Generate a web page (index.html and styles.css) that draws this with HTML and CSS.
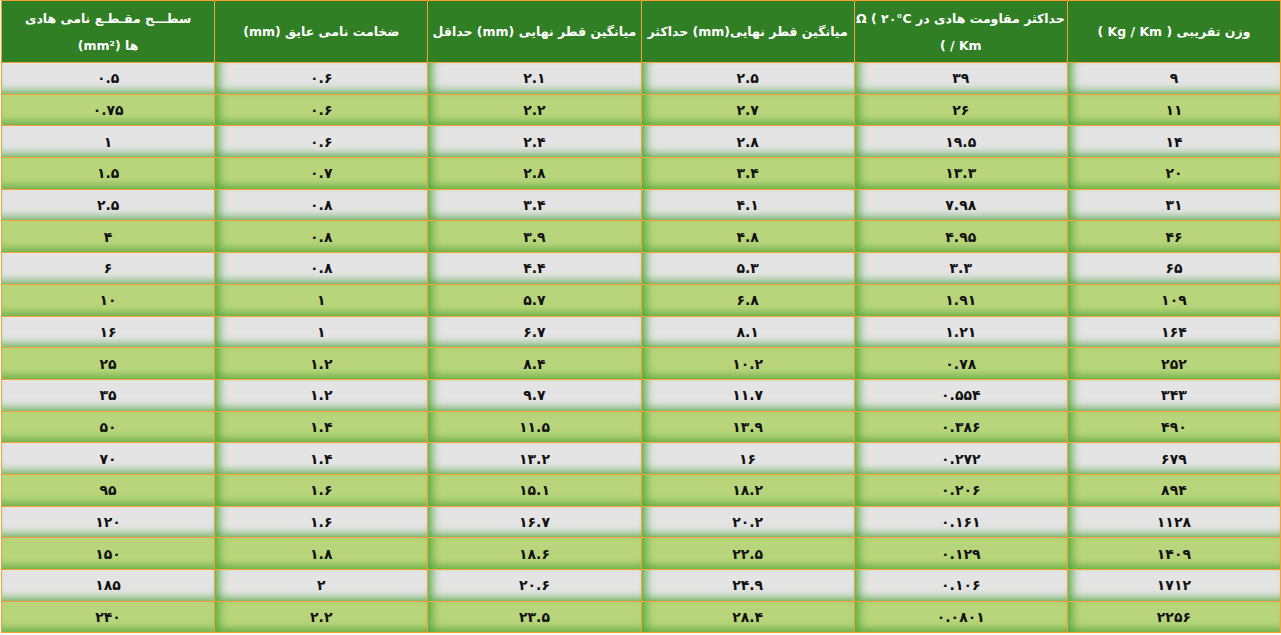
FILE: index.html
```html
<!DOCTYPE html>
<html lang="fa" dir="rtl">
<head>
<meta charset="utf-8">
<title>جدول مشخصات کابل</title>
<link rel="stylesheet" href="styles.css">
</head>
<body>
<table class="spec">
<thead>
<tr>
<th>وزن تقریبی ( Kg / Km )</th>
<th>حداکثر مقاومت هادی در <bdi class="ltr">۲۰°C</bdi> <bdi class="ltr">Ω (</bdi><br><bdi class="ltr">( / Km</bdi></th>
<th>میانگین قطر نهایی(mm) حداکثر</th>
<th>میانگین قطر نهایی (mm) حداقل</th>
<th>ضخامت نامی عایق (mm)</th>
<th>سطـــح مقـطـع نامی هادی<br>ها (mm²)</th>
</tr>
</thead>
<tbody>
<tr class="gray"><td>۹</td><td>۳۹</td><td>۲.۵</td><td>۲.۱</td><td>۰.۶</td><td>۰.۵</td></tr>
<tr class="green"><td>۱۱</td><td>۲۶</td><td>۲.۷</td><td>۲.۲</td><td>۰.۶</td><td>۰.۷۵</td></tr>
<tr class="gray"><td>۱۴</td><td>۱۹.۵</td><td>۲.۸</td><td>۲.۴</td><td>۰.۶</td><td>۱</td></tr>
<tr class="green"><td>۲۰</td><td>۱۳.۳</td><td>۳.۴</td><td>۲.۸</td><td>۰.۷</td><td>۱.۵</td></tr>
<tr class="gray"><td>۳۱</td><td>۷.۹۸</td><td>۴.۱</td><td>۳.۴</td><td>۰.۸</td><td>۲.۵</td></tr>
<tr class="green"><td>۴۶</td><td>۴.۹۵</td><td>۴.۸</td><td>۳.۹</td><td>۰.۸</td><td>۴</td></tr>
<tr class="gray"><td>۶۵</td><td>۳.۳</td><td>۵.۳</td><td>۴.۴</td><td>۰.۸</td><td>۶</td></tr>
<tr class="green"><td>۱۰۹</td><td>۱.۹۱</td><td>۶.۸</td><td>۵.۷</td><td>۱</td><td>۱۰</td></tr>
<tr class="gray"><td>۱۶۴</td><td>۱.۲۱</td><td>۸.۱</td><td>۶.۷</td><td>۱</td><td>۱۶</td></tr>
<tr class="green"><td>۲۵۲</td><td>۰.۷۸</td><td>۱۰.۲</td><td>۸.۴</td><td>۱.۲</td><td>۲۵</td></tr>
<tr class="gray"><td>۳۴۳</td><td>۰.۵۵۴</td><td>۱۱.۷</td><td>۹.۷</td><td>۱.۲</td><td>۳۵</td></tr>
<tr class="green"><td>۴۹۰</td><td>۰.۳۸۶</td><td>۱۳.۹</td><td>۱۱.۵</td><td>۱.۴</td><td>۵۰</td></tr>
<tr class="gray"><td>۶۷۹</td><td>۰.۲۷۲</td><td>۱۶</td><td>۱۳.۲</td><td>۱.۴</td><td>۷۰</td></tr>
<tr class="green"><td>۸۹۴</td><td>۰.۲۰۶</td><td>۱۸.۲</td><td>۱۵.۱</td><td>۱.۶</td><td>۹۵</td></tr>
<tr class="gray"><td>۱۱۲۸</td><td>۰.۱۶۱</td><td>۲۰.۲</td><td>۱۶.۷</td><td>۱.۶</td><td>۱۲۰</td></tr>
<tr class="green"><td>۱۴۰۹</td><td>۰.۱۲۹</td><td>۲۲.۵</td><td>۱۸.۶</td><td>۱.۸</td><td>۱۵۰</td></tr>
<tr class="gray"><td>۱۷۱۲</td><td>۰.۱۰۶</td><td>۲۴.۹</td><td>۲۰.۶</td><td>۲</td><td>۱۸۵</td></tr>
<tr class="green"><td>۲۲۵۶</td><td>۰.۰۸۰۱</td><td>۲۸.۴</td><td>۲۳.۵</td><td>۲.۲</td><td>۲۴۰</td></tr>
</tbody>
</table>
</body>
</html>
```

FILE: styles.css
```css
html, body {
  margin: 0;
  padding: 0;
  background: #ffffff;
}

body {
  font-family: "DejaVu Sans", sans-serif;
  overflow: hidden;
}

.spec {
  width: 1280px;
  border-collapse: collapse;
  table-layout: fixed;
  direction: rtl;
}

.spec th,
.spec td {
  border: 1px solid #f6a035;
  text-align: center;
  vertical-align: middle;
  padding: 0 2px;
}

.spec th {
  height: 61px;
  background: #317f25;
  color: #ffffff;
  font-weight: bold;
  font-size: 12.5px;
  line-height: 27px;
  white-space: nowrap;
}

.ltr {
  direction: ltr;
  unicode-bidi: isolate;
}

.spec td {
  height: 30.7px;
  color: #111111;
  font-weight: bold;
  font-size: 14px;
  box-shadow: inset 0 -9px 8px -6px rgba(75, 160, 55, 0.8);
}

.spec td:not(:last-child) {
  box-shadow: inset 11px 0 10px -7px rgba(75, 165, 55, 0.9),
              inset 0 -9px 8px -6px rgba(75, 160, 55, 0.8);
}

.spec tr.gray td {
  background: #e4e4e4;
}

.spec tr.green td {
  background: #b9d57b;
}
```
